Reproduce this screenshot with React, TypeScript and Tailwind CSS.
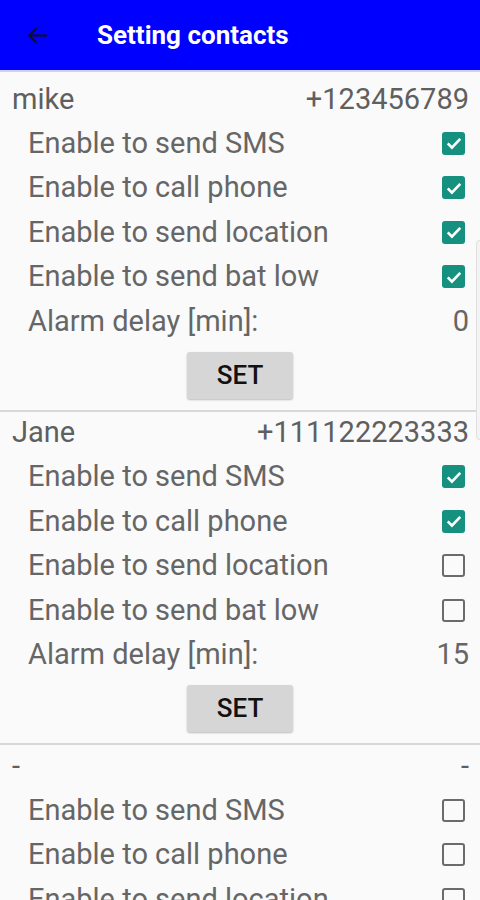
import React from 'react';

type Contact = {
  name: string;
  phone: string;
  flags: boolean[];
  delay: string;
};

const contacts: Contact[] = [
  { name: 'mike', phone: '+123456789', flags: [true, true, true, true], delay: '0' },
  { name: 'Jane', phone: '+111122223333', flags: [true, true, false, false], delay: '15' },
  { name: '-', phone: '-', flags: [false, false, false, false], delay: '' },
];

const labels = [
  'Enable to send SMS',
  'Enable to call phone',
  'Enable to send location',
  'Enable to send bat low',
];

const CheckBox = ({ checked }: { checked: boolean }) =>
  checked ? (
    <div className="flex h-[23px] w-[23px] items-center justify-center rounded-[3px] bg-[#16917f]">
      <svg viewBox="0 0 24 24" className="h-[20px] w-[20px]" fill="none" stroke="white" strokeWidth="3.2">
        <path d="M4.5 12.5l5 5L19.5 7" />
      </svg>
    </div>
  ) : (
    <div className="h-[23px] w-[23px] rounded-[3px] border-2 border-[#6b6b6b]" />
  );

const ContactBlock = ({ contact, last }: { contact: Contact; last?: boolean }) => (
  <div className={last ? '' : 'border-b-2 border-[#d8d8d8]'}>
    <div className="flex h-[43px] items-center justify-between pl-3 pr-[11px] text-[29px] text-[#5f5f5f]">
      <span>{contact.name}</span>
      <span>{contact.phone}</span>
    </div>
    {labels.map((label, i) => (
      <div key={label} className="flex h-[44.5px] items-center justify-between pl-7 pr-[15px] text-[29px] text-[#666]">
        <span>{label}</span>
        <CheckBox checked={contact.flags[i]} />
      </div>
    ))}
    {!last && (
      <>
        <div className="flex h-[44.5px] items-center justify-between pl-7 pr-[11px] text-[29px] text-[#666]">
          <span>Alarm delay [min]:</span>
          <span>{contact.delay}</span>
        </div>
        <div className="flex justify-center pt-[8px] pb-[11px]">
          <button className="h-[47px] w-[106px] rounded-[3px] bg-[#d6d6d6] text-[26px] font-medium text-[#111] shadow-[0_1px_2px_rgba(0,0,0,0.25)]">
            SET
          </button>
        </div>
      </>
    )}
  </div>
);

export default function App() {
  return (
    <div
      className="relative h-[900px] w-[480px] overflow-hidden bg-[#fafafa]"
      style={{ fontFamily: 'Roboto, "Noto Sans", sans-serif' }}
    >
      <div className="flex h-[70px] items-center bg-[#0000ff]">
        <svg viewBox="0 0 24 24" className="ml-[25px] h-[25px] w-[25px]" fill="none" stroke="#111" strokeWidth="2">
          <path d="M21 12H4M11 5l-7 7 7 7" />
        </svg>
        <span className="ml-[47px] text-[26px] font-bold text-white">Setting contacts</span>
      </div>
      <div className="h-[2px] bg-[#d0d0ff]" />
      <div className="pt-[6px]">
        {contacts.map((c, i) => (
          <ContactBlock key={i} contact={c} last={i === contacts.length - 1} />
        ))}
      </div>
      <div className="absolute right-0 top-[240px] h-[200px] w-[4px] rounded-l border border-r-0 border-[#e0e0e0] bg-[#f4f4f4]" />
    </div>
  );
}
